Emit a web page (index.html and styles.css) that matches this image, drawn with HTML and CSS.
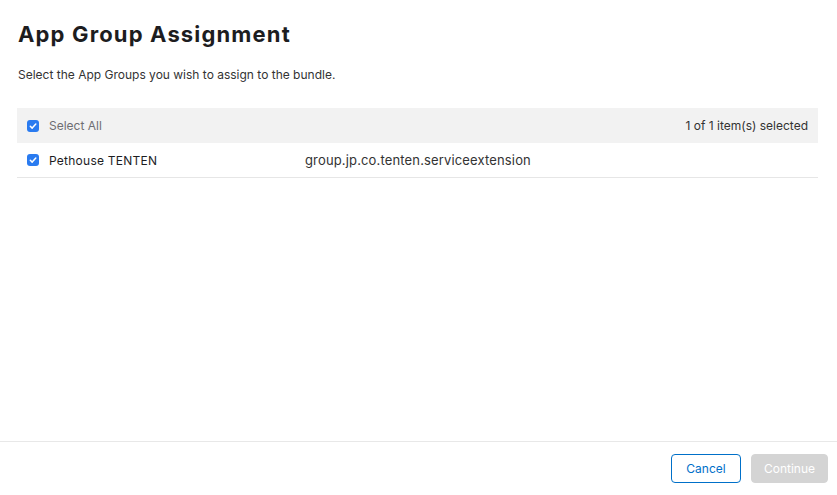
FILE: index.html
```html
<!DOCTYPE html>
<html>
<head>
<meta charset="utf-8">
<link rel="stylesheet" href="styles.css">
</head>
<body>
<div class="modal">
  <div class="content">
    <h1 class="title">App Group Assignment</h1>
    <p class="subtitle">Select the App Groups you wish to assign to the bundle.</p>
    <div class="table">
      <div class="row head">
        <label class="cell name"><span class="check"><svg viewBox="0 0 12 12" width="12" height="12"><path d="M3.3 6.2 L5.2 8.1 L8.8 4" fill="none" stroke="#fff" stroke-width="1.5" stroke-linecap="round" stroke-linejoin="round"/></svg></span><span class="muted">Select All</span></label>
        <span class="count">1 of 1 item(s) selected</span>
      </div>
      <div class="row item">
        <label class="cell name"><span class="check"><svg viewBox="0 0 12 12" width="12" height="12"><path d="M3.3 6.2 L5.2 8.1 L8.8 4" fill="none" stroke="#fff" stroke-width="1.5" stroke-linecap="round" stroke-linejoin="round"/></svg></span><span class="pname">Pethouse TENTEN</span></label>
        <span class="cell ident">group.jp.co.tenten.serviceextension</span>
      </div>
    </div>
  </div>
  <div class="footer">
    <button class="btn cancel">Cancel</button>
    <button class="btn continue" disabled>Continue</button>
  </div>
</div>
</body>
</html>
```

FILE: styles.css
```css
* { box-sizing: border-box; }
html, body { margin: 0; padding: 0; }
body {
  font-family: Inter, "Noto Sans", "Liberation Sans", sans-serif;
  color: #1d1d1f;
  background: #fff;
  width: 837px;
  height: 495px;
  overflow: hidden;
}
.modal {
  height: 495px;
  display: flex;
  flex-direction: column;
}
.content {
  flex: 1;
  padding: 20px 19px 0 17px;
}
.title {
  margin: 0 0 0 1px;
  font-size: 22px;
  font-weight: 700;
  line-height: 28px;
  letter-spacing: 1.15px;
  color: #1d1d1f;
}
.subtitle {
  margin: 19px 0 0 1px;
  font-size: 12px;
  line-height: 16px;
  color: #333;
}
.table {
  margin-top: 25px;
}
.row {
  display: flex;
  align-items: center;
  height: 35px;
  font-size: 12px;
  padding: 0 10px;
}
.row.head {
  background: #f2f2f2;
  justify-content: space-between;
}
.row.item {
  border-bottom: 1px solid #e6e6e6;
}
.cell.name {
  display: flex;
  align-items: center;
  width: 278px;
}
.check {
  width: 12px;
  height: 12px;
  border-radius: 3px;
  background: #2a7bf0;
  display: inline-flex;
  align-items: center;
  justify-content: center;
  margin-right: 10px;
}
.check svg { display: block; }
.muted { color: #6e6e73; }
.pname { letter-spacing: 0.25px; }
.count { color: #333; }
.ident { color: #333; font-size: 13px; letter-spacing: 0.15px; }
.footer {
  height: 54px;
  border-top: 1px solid #e8e8e8;
  display: flex;
  justify-content: flex-end;
  align-items: center;
  gap: 10px;
  padding: 0 9px 0 0;
  margin-bottom: 0;
}
.btn {
  font-family: inherit;
  font-size: 12px;
  height: 29px;
  border-radius: 4px;
  padding: 0;
}
.cancel {
  width: 70px;
  background: #fff;
  color: #0070c9;
  border: 1px solid #0070c9;
}
.continue {
  width: 77px;
  background: #d4d4d4;
  color: #fff;
  border: 1px solid #d4d4d4;
}
```
